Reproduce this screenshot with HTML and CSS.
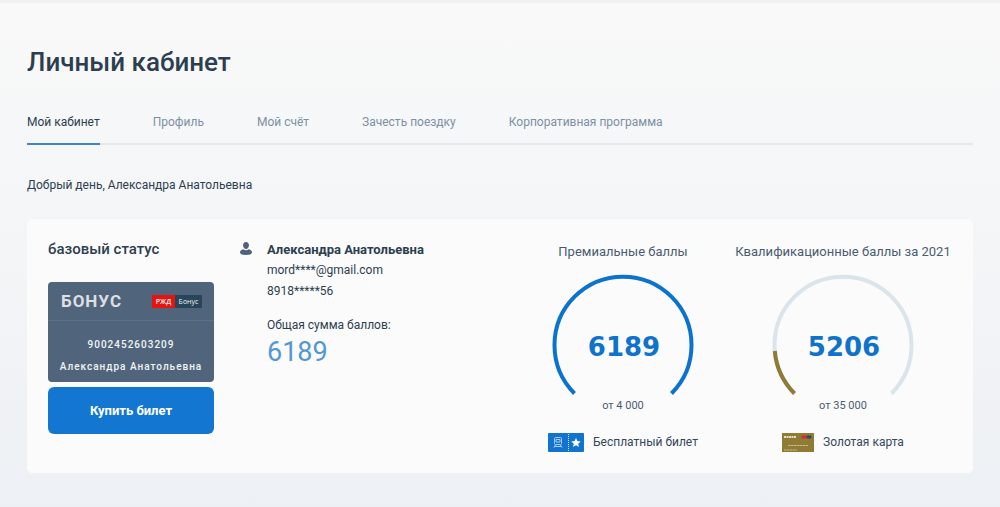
FILE: index.html
```html
<!DOCTYPE html>
<html lang="ru">
<head>
<meta charset="utf-8">
<meta name="viewport" content="width=device-width, initial-scale=1">
<title>Личный кабинет</title>
<link rel="stylesheet" href="styles.css">
</head>
<body>
<main class="page">
  <h1 class="page-title">Личный кабинет</h1>
  <nav class="tabs">
    <a class="tab tab-active" href="#cabinet" aria-current="page">Мой кабинет</a>
    <a class="tab" href="#profile">Профиль</a>
    <a class="tab" href="#account">Мой счёт</a>
    <a class="tab" href="#trip">Зачесть поездку</a>
    <a class="tab" href="#corporate">Корпоративная программа</a>
  </nav>
  <p class="greeting">Добрый день, Александра Анатольевна</p>

  <section class="summary">
    <div class="status">
      <h2 class="status-title">базовый статус</h2>
      <div class="card">
        <div class="card-head">
          <span class="card-name">БОНУС</span>
          <span class="brand"><span class="brand-red">РЖД</span><span class="brand-dark">Бонус</span></span>
        </div>
        <div class="card-body">
          <span>9002452603209</span>
          <span>Александра Анатольевна</span>
        </div>
      </div>
      <button class="buy" type="button">Купить билет</button>
    </div>

    <div class="user">
      <svg class="user-icon" viewBox="0 0 12 13" aria-hidden="true">
        <path d="M6 0C7.900 0 8.900 1.300 8.900 3.200S7.800 6.900 6 6.900 3.100 5.100 3.100 3.200 4.100 0 6 0z"/>
        <path d="M3.300 7.300C4.100 7.900 5 8.200 6 8.200s1.900-.3 2.700-.9C10.900 7.800 12 9 12 10.500 12 12.200 9.500 13 6 13S0 12.200 0 10.500C0 9 1.100 7.800 3.300 7.300z"/>
      </svg>
      <div class="user-info">
        <strong class="user-name">Александра Анатольевна</strong>
        <span>mord****@gmail.com</span>
        <span>8918*****56</span>
        <span class="total-label">Общая сумма баллов:</span>
        <span class="total">6189</span>
      </div>
    </div>

    <div class="goal">
      <h3 class="goal-title">Премиальные баллы</h3>
      <svg class="gauge" viewBox="0 0 142 122" role="img" aria-label="6189">
        <path class="arc arc-blue" d="M22.500 119.500A68.500 68.500 0 1 1 119.500 119.500"/>
        <text class="gauge-value" x="72" y="82">6189</text>
      </svg>
      <p class="goal-from">от 4 000</p>
      <div class="reward">
        <svg class="ticket" viewBox="0 0 36 19" aria-hidden="true">
          <rect width="36" height="19" rx="1" fill="#1274cf"/>
          <path d="M20.500 1v18" stroke="#d5e6f7" stroke-dasharray="1 1"/>
          <g fill="none" stroke="#a9cdf0">
            <rect x="6.500" y="4.500" width="7" height="7" rx="1"/>
            <path d="M8 6.500h4v2.500H8zM6 14.500l1.500-2.500M14 14.500L12.500 12M6 13.500h8"/>
          </g>
          <path d="M28 5l1.400 3.100 3.300.4-2.500 2.200.7 3.300L28 12.300 25.100 14l.7-3.300-2.500-2.200 3.300-.4z" fill="#fff"/>
        </svg>
        <span>Бесплатный билет</span>
      </div>
    </div>

    <div class="goal">
      <h3 class="goal-title">Квалификационные баллы за 2021</h3>
      <svg class="gauge" viewBox="0 0 142 122" role="img" aria-label="5206">
        <path class="arc arc-track" d="M22.500 119.500A68.500 68.500 0 1 1 119.500 119.500"/>
        <path class="arc arc-gold" d="M22.500 119.500A68.500 68.500 0 0 1 2.800 77"/>
        <text class="gauge-value" x="72" y="82">5206</text>
      </svg>
      <p class="goal-from">от 35 000</p>
      <div class="reward">
        <svg class="gold-card" viewBox="0 0 32 19" aria-hidden="true">
          <rect width="32" height="19" fill="#8f7b33"/>
          <path d="M2 4h12" stroke="#e6dfc7" stroke-width="2" stroke-dasharray="2 .5"/>
          <rect x="19.500" y="2.500" width="5" height="3" rx="1" fill="#dc2832"/>
          <rect x="24.500" y="2.500" width="5" height="3" rx="1" fill="#34466f"/>
          <path d="M6 12.500h20M2 17h13" stroke="#cabe92" stroke-dasharray="2.500 .5"/>
        </svg>
        <span>Золотая карта</span>
      </div>
    </div>
  </section>
</main>
</body>
</html>
```
FILE: styles.css
```css
* {
  box-sizing: border-box;
}

body {
  margin: 0;
  min-height: 100vh;
  border-top: 3px solid #eff0f2;
  background: linear-gradient(#f9f9f9, #f3f5f7 50%, #edf0f4);
  color: #2c3e50;
  font: 12px/21px Roboto, "Noto Sans", sans-serif;
}

h1,
h2,
h3,
p {
  margin: 0;
}

.page {
  padding: 40px 27px 34px;
}

.page-title {
  font-size: 26px;
  line-height: 38px;
  font-weight: 500;
}

.tabs {
  display: flex;
  gap: 53px;
  margin-top: 31px;
  border-bottom: 2px solid #e5e8eb;
}

.tab {
  margin-bottom: -2px;
  padding-bottom: 10px;
  border-bottom: 2px solid transparent;
  color: #7d8fa5;
  text-decoration: none;
}

.tab-active {
  border-color: #3b87cc;
  color: #2c3e50;
}

.greeting {
  margin-top: 30px;
}

.summary {
  display: grid;
  grid-template-columns: 166px 1fr 220px 220px;
  margin-top: 23px;
  padding: 20px 20px 20px 21px;
  border-radius: 5px;
  background: #fbfbfb;
}

.status-title {
  font-size: 15px;
  line-height: 21px;
  font-weight: 500;
}

.card {
  margin-top: 22px;
  border-radius: 4px;
  background: #50657c;
  color: #f2f4f6;
}

.card-head {
  display: flex;
  align-items: center;
  justify-content: space-between;
  height: 39px;
  padding: 0 12px 0 13px;
  border-bottom: 1px solid #5c7086;
}

.card-name {
  color: #dddfe2;
  font-size: 17px;
  font-weight: 700;
  letter-spacing: 1px;
}

.brand {
  display: flex;
  font: 7px/13px "Open Sans", sans-serif;
  text-align: center;
}

.brand-red {
  width: 23px;
  background: #e7130f;
  font-weight: 600;
}

.brand-dark {
  width: 27px;
  background: #27455b;
}

.card-body {
  display: flex;
  flex-direction: column;
  gap: 2px;
  padding: 14px 0 5px;
  font-size: 10px;
  line-height: 20px;
  font-weight: 500;
  letter-spacing: 1px;
  text-align: center;
  white-space: nowrap;
}

.buy {
  width: 100%;
  height: 47px;
  margin-top: 5px;
  border: 0;
  border-radius: 6px;
  background: #1376d0;
  color: #fff;
  font: 700 13px/21px Roboto, "Noto Sans", sans-serif;
}

.user {
  display: flex;
  align-items: flex-start;
  gap: 15px;
  padding-left: 26px;
}

.user-icon {
  width: 12px;
  height: 13px;
  margin-top: 3px;
  fill: #50617a;
}

.user-info {
  display: flex;
  flex-direction: column;
}

.user-name {
  font-size: 13px;
}

.total-label {
  margin-top: 13px;
}

.total {
  color: #5297d5;
  font-size: 27px;
  line-height: 32px;
}

.goal {
  display: flex;
  flex-direction: column;
  align-items: center;
  color: #4a5b70;
}

.goal-title {
  font-size: 13px;
  line-height: 25px;
  font-weight: 400;
  white-space: nowrap;
}

.gauge {
  width: 142px;
  height: 122px;
  margin-top: 10px;
}

.arc {
  fill: none;
  stroke-width: 4px;
}

.arc-blue {
  stroke: #0b73cf;
}

.arc-track {
  stroke: #d9e4eb;
}

.arc-gold {
  stroke: #8d7b37;
}

.gauge-value {
  fill: #0f73cc;
  font: 700 26px "DejaVu Sans", sans-serif;
  text-anchor: middle;
}

.goal-from {
  font-size: 11px;
  line-height: 20px;
}

.reward {
  display: flex;
  align-items: center;
  gap: 9px;
  margin-top: 16px;
  color: #34475b;
}

.ticket {
  width: 36px;
  height: 19px;
}

.gold-card {
  width: 32px;
  height: 19px;
}
```
